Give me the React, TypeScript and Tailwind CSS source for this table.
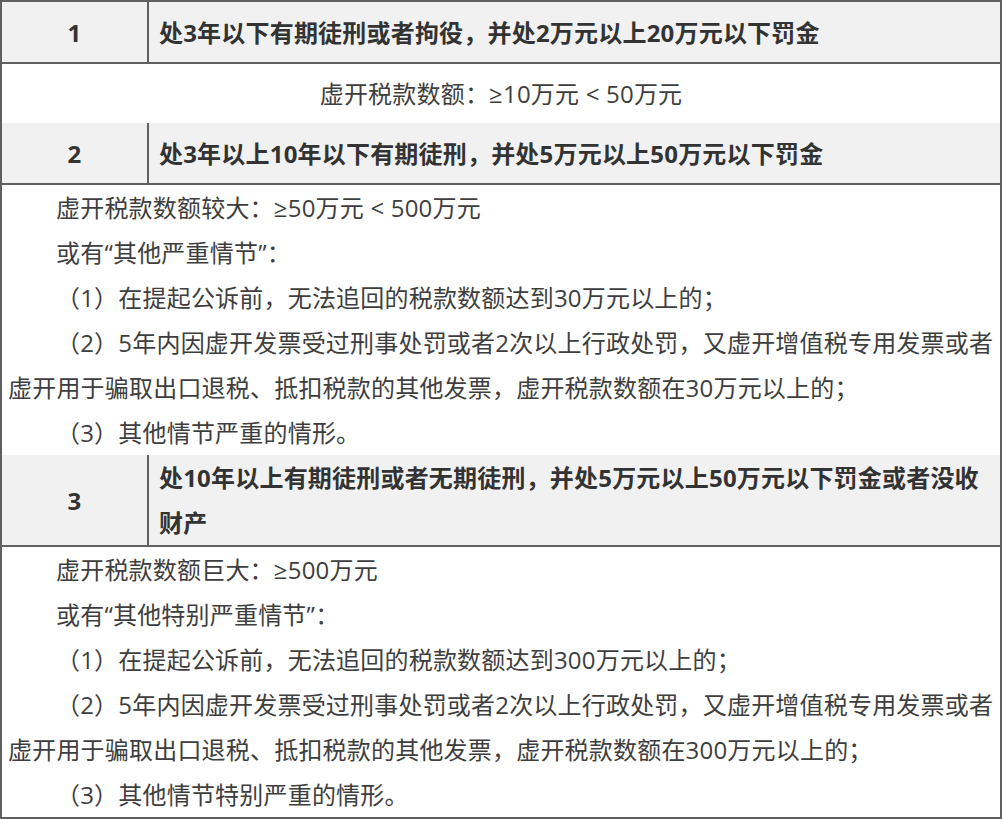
const FONT = "font-['Open_Sans','Noto_Sans_CJK_SC',sans-serif]";

interface TierProps {
  no:       string;
  penalty:  string;
  lines:    string[];
}

const TIERS: TierProps[] = [
  {
    no: '2',
    penalty: '处3年以上10年以下有期徒刑，并处5万元以上50万元以下罚金',
    lines: [
      '虚开税款数额较大：≥50万元 < 500万元',
      '或有“其他严重情节”：',
      '（1）在提起公诉前，无法追回的税款数额达到30万元以上的；',
      '（2）5年内因虚开发票受过刑事处罚或者2次以上行政处罚，又虚开增值税专用发票或者虚开用于骗取出口退税、抵扣税款的其他发票，虚开税款数额在30万元以上的；',
      '（3）其他情节严重的情形。',
    ],
  },
  {
    no: '3',
    penalty: '处10年以上有期徒刑或者无期徒刑，并处5万元以上50万元以下罚金或者没收财产',
    lines: [
      '虚开税款数额巨大：≥500万元',
      '或有“其他特别严重情节”：',
      '（1）在提起公诉前，无法追回的税款数额达到300万元以上的；',
      '（2）5年内因虚开发票受过刑事处罚或者2次以上行政处罚，又虚开增值税专用发票或者虚开用于骗取出口退税、抵扣税款的其他发票，虚开税款数额在300万元以上的；',
      '（3）其他情节特别严重的情形。',
    ],
  },
];

function HeaderRow({ no, penalty }: { no: string; penalty: string }) {
  return (
    <div className="flex bg-[#f1f1f1] text-[#333] font-bold border-t-2 border-[#606060] first:border-t-0">
      <div className="w-[147px] shrink-0 min-h-[60px] flex items-center justify-center border-r-2 border-[#606060]">
        {no}
      </div>
      <div className="flex-1 min-h-[60px] flex items-center pl-[10px] pr-2">
        <p>{penalty}</p>
      </div>
    </div>
  );
}

export default function App() {
  return (
    <div className={`${FONT} w-[1002px] text-[24px] leading-[45px] tracking-[0.2px] text-[#3e3e3e] bg-white border-2 border-[#606060]`}>
      <HeaderRow no="1" penalty="处3年以下有期徒刑或者拘役，并处2万元以上20万元以下罚金" />
      <div className="h-[61px] flex items-center justify-center border-t-2 border-[#606060]">
        虚开税款数额：≥10万元 &lt; 50万元
      </div>

      {TIERS.map((tier) => (
        <div key={tier.no}>
          <HeaderRow no={tier.no} penalty={tier.penalty} />
          <div className="border-t-2 border-[#606060] pl-[6px] pr-[6px]">
            {tier.lines.map((line, i) => (
              <p key={i} className="indent-[48px]">{line}</p>
            ))}
          </div>
        </div>
      ))}
    </div>
  );
}
